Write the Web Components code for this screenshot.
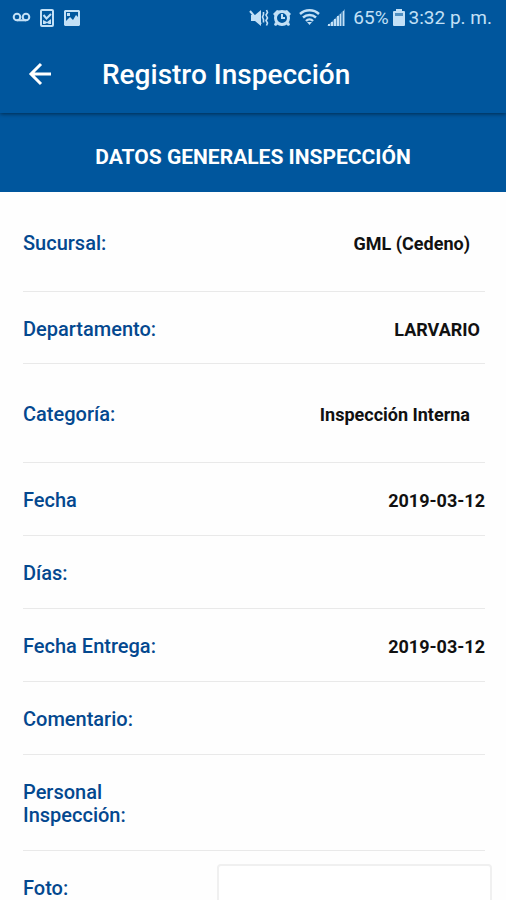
<!DOCTYPE html>
<html lang="es">
<head>
<meta charset="utf-8">
<meta name="viewport" content="width=device-width, initial-scale=1">
<title>Registro Inspección</title>
<style>
    body {
        margin: 0;
        background: #fefefe;
        font-family: Roboto, "Liberation Sans", sans-serif;
    }
</style>
</head>
<body>
<inspection-page>
    <status-bar slot="top" battery="65%" time="3:32 p. m."></status-bar>
    <app-toolbar slot="top">Registro Inspección</app-toolbar>
    <section-title>Datos Generales Inspección</section-title>
    <field-list>
        <field-row label="Sucursal:" kind="picker">GML (Cedeno)</field-row>
        <field-row label="Departamento:" kind="entry">LARVARIO</field-row>
        <field-row label="Categoría:" kind="picker">Inspección Interna</field-row>
        <field-row label="Fecha">2019-03-12</field-row>
        <field-row label="Días:"></field-row>
        <field-row label="Fecha Entrega:">2019-03-12</field-row>
        <field-row label="Comentario:"></field-row>
        <field-row label="Personal Inspección:"></field-row>
        <field-row label="Foto:" kind="photo"><photo-frame></photo-frame></field-row>
    </field-list>
</inspection-page>

<script>
/* Page shell: fixed header on top, scrolling content below */
class InspectionPage extends HTMLElement {
    constructor() {
        super();
        this.attachShadow({ mode: 'open' }).innerHTML = `
            <style>
                :host {
                    display: flex;
                    flex-direction: column;
                    height: 100vh;
                }

                header {
                    flex: none;
                    z-index: 1;
                    background: #00569d;
                    box-shadow: 0 1px 4px rgba(0, 0, 0, 0.5);
                }

                main {
                    flex: 1;
                    min-height: 0;
                    overflow-y: auto;
                    scrollbar-width: none;
                }
            </style>
            <header><slot name="top"></slot></header>
            <main><slot></slot></main>
        `;
    }
}

/* Android status bar. Attributes: battery, time */
class StatusBar extends HTMLElement {
    connectedCallback() {
        if (!this.shadowRoot) this.attachShadow({ mode: 'open' });
        this.render();
    }

    render() {
        this.shadowRoot.innerHTML = `
            <style>
                :host {
                    display: flex;
                    align-items: center;
                    justify-content: space-between;
                    height: 36px;
                    padding: 0 14px 0 12px;
                    color: #c3e0f6;
                    font-size: 19px;
                    line-height: 24px;
                }

                .group {
                    display: flex;
                    align-items: center;
                    gap: 3px;
                }

                .notices {
                    gap: 6px;
                }

                svg {
                    display: block;
                    flex: none;
                    fill: currentColor;
                }

                .line {
                    fill: none;
                    stroke: currentColor;
                    stroke-width: 2;
                }
            </style>
            <div class="group notices">
                <svg class="line" width="20" height="18" viewBox="0 0 20 18">
                    <circle cx="5" cy="8" r="3.3"/>
                    <circle cx="14" cy="8" r="3.3"/>
                    <path d="M5 11.3h9"/>
                </svg>
                <svg width="18" height="20" viewBox="0 0 18 20">
                    <rect class="line" x="3" y="2" width="12" height="16" rx="1"/>
                    <path class="line" d="M5.5 7l3 3.5L13 6"/>
                    <path d="M5 16v-4l4 2 4-3v5h-2l-2-1-2 1z"/>
                </svg>
                <svg width="20" height="18" viewBox="0 0 20 18">
                    <path fill-rule="evenodd" d="M3 1h14l1 1v14l-1 1H3l-1-1V2zm1 2v9l4-4 3 3 3-5 2 2V3zM5 4h3v3H5z"/>
                </svg>
            </div>
            <div class="group">
                <svg width="20" height="20" viewBox="0 0 20 20">
                    <path d="M2 7h4l6-5v16l-6-5H2z"/>
                    <path d="M1 3l11 13" fill="none" stroke="currentColor" stroke-width="2"/>
                    <path d="M14.5 4v2.500l-1 2.500 1 2.500v3" fill="none" stroke="currentColor" stroke-width="1.6"/>
                    <path d="M17.500 2l1 2.500-1.500 2.500 1.500 3-1.500 2.500 1.500 2.500-1 2.500" fill="none" stroke="currentColor" stroke-width="1.6"/>
                </svg>
                <svg width="20" height="20" viewBox="0 0 20 20">
                    <path d="M1 6l4-4 3 1-5 5zM19 6l-4-4-3 1 5 5zM3 14l3 2-2 2-2-1zM17 14l-3 2 2 2 2-1z"/>
                    <path fill-rule="evenodd" d="M10 2a8 8 0 1 0 0 16 8 8 0 0 0 0-16zm0 3a5 5 0 1 1 0 10 5 5 0 0 1 0-10z"/>
                    <path d="M10 6v4h3" fill="none" stroke="currentColor" stroke-width="2"/>
                </svg>
                <svg width="28" height="20" viewBox="0 0 28 20">
                    <g fill="none" stroke="currentColor" stroke-width="2.4">
                        <path d="M5 6a14 14 0 0 1 19 0"/>
                        <path d="M8 9.5a9.5 9.5 0 0 1 13 0"/>
                        <path d="M11 13a5 5 0 0 1 7 0"/>
                    </g>
                    <path d="M12 14h5l-2.5 3z"/>
                </svg>
                <svg width="20" height="20" viewBox="0 0 20 20">
                    <path opacity=".45" d="M1 18L19 1v17z"/>
                    <path d="M2 16h2v2H2zM5 14h2v4H5zM8 11h2v7H8zM11 8h2v10h-2zM14 6h1v12h-1zM17 3h1v15h-1z"/>
                </svg>
                <span>&nbsp;${this.getAttribute('battery')}</span>
                <svg width="14" height="20" viewBox="0 0 14 20">
                    <path d="M4 1h6v2h2a1 1 0 0 1 1 1v13a1 1 0 0 1-1 1H2a1 1 0 0 1-1-1V4a1 1 0 0 1 1-1h2z"/>
                    <path fill="#4f8fc1" d="M3 5h8v3H3z"/>
                </svg>
                <span>${this.getAttribute('time')}</span>
            </div>
        `;
    }
}

class AppToolbar extends HTMLElement {
    constructor() {
        super();
        this.attachShadow({ mode: 'open' }).innerHTML = `
            <style>
                :host {
                    display: flex;
                    align-items: center;
                    gap: 46px;
                    height: 77px;
                    padding: 0 24px;
                    color: #fff;
                }

                button {
                    padding: 0;
                    border: 0;
                    background: none;
                    color: inherit;
                    cursor: pointer;
                }

                svg {
                    display: block;
                }

                h1 {
                    margin: 0;
                    font-size: 28px;
                    font-weight: 500;
                    line-height: 32px;
                }
            </style>
            <button type="button" aria-label="Volver">
                <svg width="32" height="32" viewBox="0 0 32 32" fill="none" stroke="currentColor" stroke-width="3">
                    <path d="M27 15H7M17 5L7 15l10 10"/>
                </svg>
            </button>
            <h1><slot></slot></h1>
        `;
    }
}

class SectionTitle extends HTMLElement {
    constructor() {
        super();
        this.attachShadow({ mode: 'open' }).innerHTML = `
            <style>
                :host {
                    display: block;
                    padding: 32px 16px 23px;
                    background: #00569d;
                    color: #fff;
                }

                h2 {
                    margin: 0;
                    font-size: 21px;
                    font-weight: 700;
                    line-height: 24px;
                    text-align: center;
                    text-transform: uppercase;
                }
            </style>
            <h2><slot></slot></h2>
        `;
    }
}

class FieldList extends HTMLElement {
    constructor() {
        super();
        this.attachShadow({ mode: 'open' }).innerHTML = `
            <style>
                :host {
                    display: block;
                    padding: 1px 21px 24px 23px;
                }
            </style>
            <slot></slot>
        `;
    }
}

/*
 * One labelled line of the record.
 * kind: picker (taller, room at the right), entry, photo, or none
 */
class FieldRow extends HTMLElement {
    connectedCallback() {
        if (!this.shadowRoot) this.attachShadow({ mode: 'open' });
        this.render();
    }

    render() {
        this.shadowRoot.innerHTML = `
            <style>
                :host {
                    display: grid;
                    grid-template-columns: 35% 1fr;
                    column-gap: 32px;
                    padding: 26px 0 23px;
                    border-bottom: 1px solid #e9e9e9;
                    font-size: 20px;
                    line-height: 23px;
                }

                :host([kind="picker"]) {
                    padding: 39px 0 36px;
                }

                :host([kind="entry"]) {
                    padding-bottom: 22px;
                }

                :host([kind="photo"]) {
                    border-bottom: 0;
                }

                .label {
                    color: #04488f;
                    font-weight: 500;
                }

                .value {
                    color: #111;
                    font-size: 18px;
                    font-weight: 700;
                    text-align: right;
                }

                :host([kind="picker"]) .value {
                    padding-right: 15px;
                }

                :host([kind="entry"]) .value {
                    padding-right: 5px;
                }

                /* the frame is taller than the text line and reaches past the divider */
                :host([kind="photo"]) .value {
                    margin: -13px -7px 0 0;
                }
            </style>
            <div class="label">${this.getAttribute('label')}</div>
            <div class="value"><slot></slot></div>
        `;
    }
}

class PhotoFrame extends HTMLElement {
    constructor() {
        super();
        this.attachShadow({ mode: 'open' }).innerHTML = `
            <style>
                :host {
                    display: block;
                    box-sizing: border-box;
                    min-height: 200px;
                    border: 2px solid #f0f0f0;
                    border-radius: 4px;
                    background: #fff;
                }
            </style>
            <slot></slot>
        `;
    }
}

customElements.define('inspection-page', InspectionPage);
customElements.define('status-bar', StatusBar);
customElements.define('app-toolbar', AppToolbar);
customElements.define('section-title', SectionTitle);
customElements.define('field-list', FieldList);
customElements.define('field-row', FieldRow);
customElements.define('photo-frame', PhotoFrame);
</script>
</body>
</html>
